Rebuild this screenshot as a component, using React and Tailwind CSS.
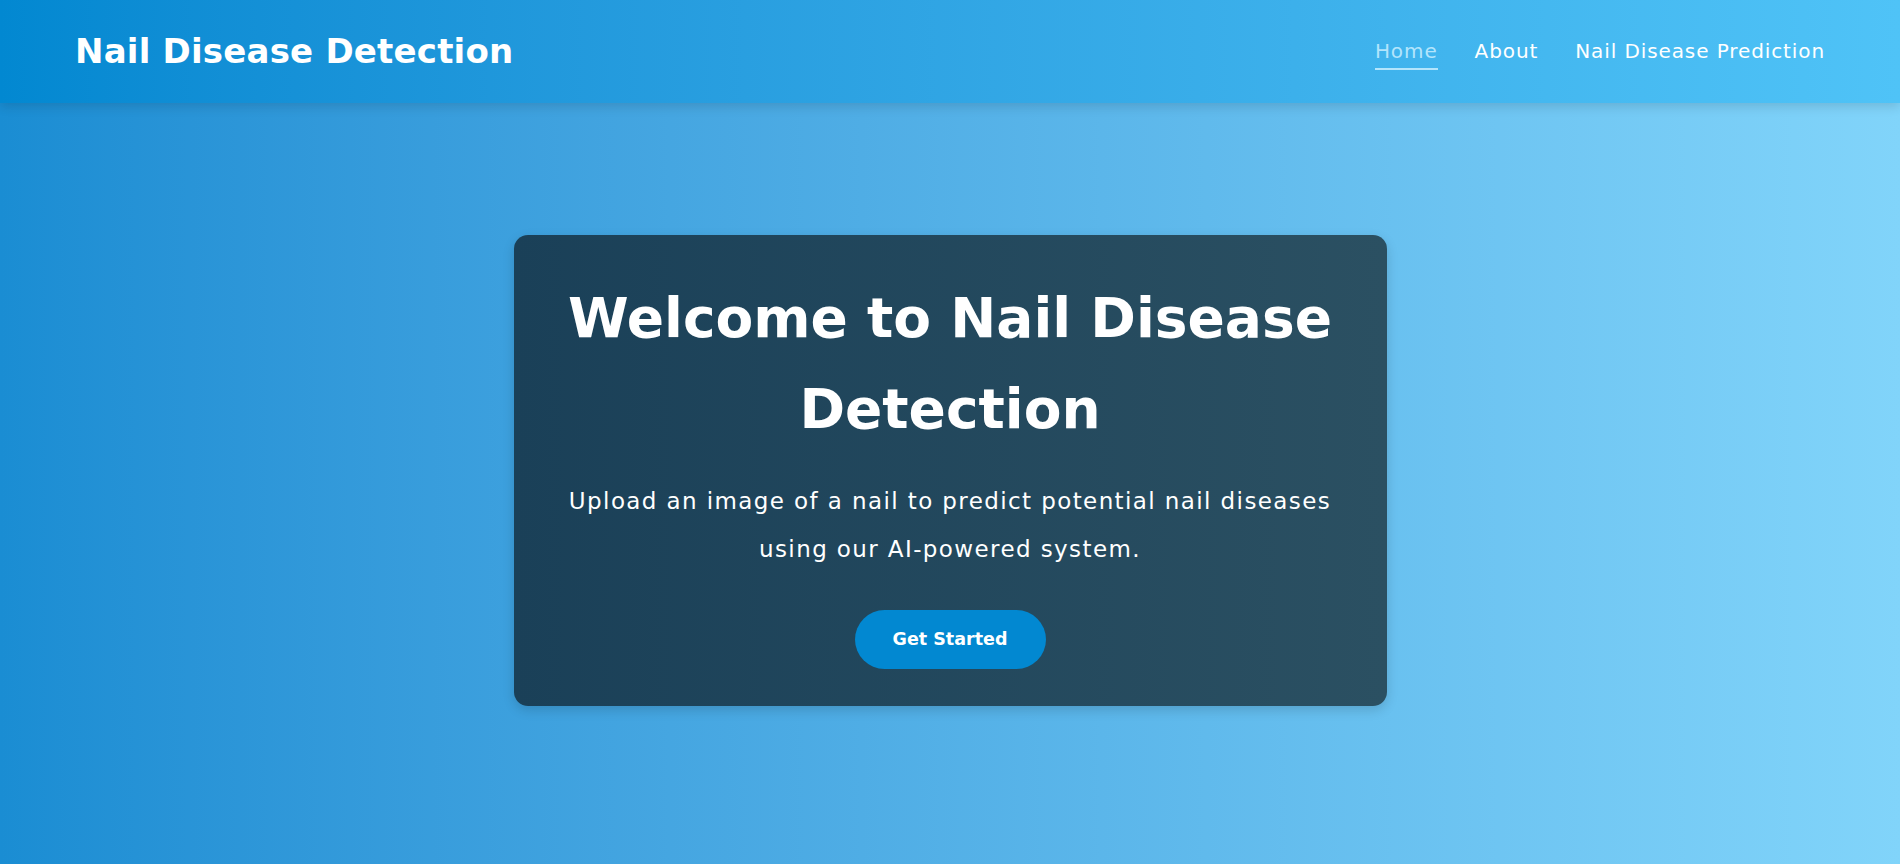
import React from 'react'

const font = { fontFamily: '"DejaVu Sans", Verdana, sans-serif' }

function Header() {
  return (
    <header className="relative z-10 flex h-[103px] items-center justify-between bg-gradient-to-r from-[#0288d1] to-[#4fc3f7] px-[75px] shadow-[0_4px_10px_rgba(0,0,0,0.12)]">
      <h1 className="text-[34px] font-bold tracking-[0.2px] text-white">Nail Disease Detection</h1>
      <nav className="flex items-center gap-[37px] text-[20px] tracking-[0.9px] text-white">
        <a className="mt-[3px] border-b-2 border-[#b3e5fc] pb-[2px] text-[#b3e5fc]">Home</a>
        <a className="-mt-[2px]">About</a>
        <a className="-mt-[2px]">Nail Disease Prediction</a>
      </nav>
    </header>
  )
}

export default function App() {
  return (
    <div style={font} className="flex min-h-[864px] flex-col bg-gradient-to-r from-[#1a8dd3] to-[#81d4fa]">
      <Header />
      <main className="flex flex-1 justify-center pt-[132px]">
        <section className="flex h-[471px] w-[873px] flex-col items-center rounded-[14px] bg-gradient-to-r from-[#1a4058] to-[#2b5062] px-[40px] pt-[38px] text-center text-white shadow-[0_4px_12px_rgba(0,0,0,0.15)]">
          <h2 className="text-[55px] font-bold leading-[91px]">Welcome to Nail Disease Detection</h2>
          <p className="mt-[22px] max-w-[800px] text-[23px] leading-[48px] tracking-[1.4px]">
            Upload an image of a nail to predict potential nail diseases using our AI-powered system.
          </p>
          <button className="mt-[37px] h-[59px] w-[191px] rounded-full bg-[#0288d1] text-[17.5px] font-bold text-white">
            Get Started
          </button>
        </section>
      </main>
    </div>
  )
}
